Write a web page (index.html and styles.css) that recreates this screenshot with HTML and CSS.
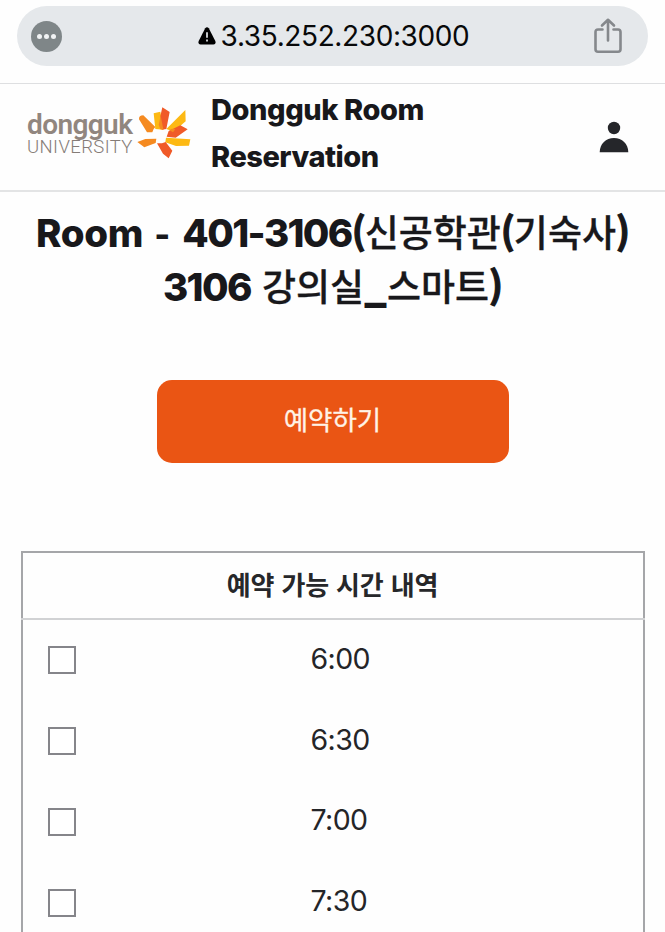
FILE: index.html
```html
<!DOCTYPE html>
<html lang="ko">
<head>
<meta charset="utf-8">
<title>Dongguk Room Reservation</title>
<link rel="stylesheet" href="styles.css">
</head>
<body>
<div class="browser-bar">
  <div class="address">
    <span class="more"><i></i><i></i><i></i></span>
    <div class="url">
      <svg class="warning" width="18" height="18" viewBox="0 0 18 18"><path d="M7.200 1.200Q9-.8 10.800 1.200L17.300 14Q18.300 17.500 15.500 17.500H2.500Q-.3 17.500.7 14Z"/><path class="mark" d="M9 5.200V10.700M9 12.600V14.500"/></svg>
      <span>3.35.252.230:3000</span>
    </div>
    <svg class="share" width="28" height="36" viewBox="0 0 28 36"><path d="M8.500 11.500H4Q1.500 11.500 1.500 14V31.200Q1.500 33.700 4 33.700H24Q26.500 33.700 26.500 31.200V14Q26.500 11.500 24 11.500H19.500M14 22.500V2M8 7.500L14 1.800L20 7.500"/></svg>
  </div>
</div>
<header class="site-header">
  <div class="logo">
    <div class="wordmark"><span class="dongguk">dongguk</span><span class="university">UNIVERSITY</span></div>
    <svg class="flower" width="56" height="54" viewBox="408 79 168 162">
      <path fill="#f58a20" d="M417 119Q416 107 430 107L466 142Q458 149 457 158L441 158ZM412 187L436 178L469 177L467 190L433 203Z"/>
      <path fill="#fdb913" d="M461 101L481 96L491 150L466 148ZM556 91L557 125L519 158Q510 151 499 148ZM498 174L571 179L567 198L528 199L496 188Z"/>
      <path fill="#f05a28" d="M487 83L509 97L499 148L485 150L481 110ZM541 137L563 149L527 174L500 171L506 154ZM471 191L486 191L497 187L517 213L506 236L489 222Z"/>
      <path fill="#f58a20" d="M482 108L490 149L481 149L476 135ZM508 151L519 158L526 149L516 147Z"/>
    </svg>
  </div>
  <div class="site-name">Dongguk Room<br><span class="reservation">Reservation</span></div>
  <svg class="user" width="30" height="32" viewBox="0 0 30 32"><circle cx="15" cy="7" r="6.200"/><path d="M.7 31.200C.7 23 7 17 15 17S29.300 23 29.300 31.200Z"/></svg>
</header>
<main>
  <h1><span class="line"><b class="room">Room</b><b class="dash">-</b><b class="number">401-3106</b><span class="ko"><b>(</b>신공학관<b>(</b>기숙사<b>)</b></span></span><span class="line"><b class="number second">3106</b><span class="ko">강의실<b class="underscore">_</b>스마트<b>)</b></span></span></h1>
  <button class="reserve">예약하기</button>
  <section class="times">
    <h2>예약 가능 시간 내역</h2>
    <label class="slot"><input type="checkbox"><span>6:00</span></label>
    <label class="slot"><input type="checkbox"><span>6:30</span></label>
    <label class="slot"><input type="checkbox"><span>7:00</span></label>
    <label class="slot"><input type="checkbox"><span>7:30</span></label>
  </section>
</main>
</body>
</html>
```
FILE: styles.css
```css
* { box-sizing: border-box; }
html { overflow: hidden; }
body {
  margin: 0;
  height: 932px;
  overflow: hidden;
  display: flex;
  flex-direction: column;
  background: #fefefe;
  color: #18181b;
  font-family: Inter, "Noto Sans CJK KR", sans-serif;
}
.browser-bar {
  flex: none;
  height: 84px;
  padding: 6px 17px 0;
  border-bottom: 1px solid #dedfe1;
}
.address {
  height: 60px;
  border-radius: 30px;
  background: #e5e8eb;
  display: grid;
  grid-template-columns: 60px 1fr 60px;
  align-items: center;
  padding: 0 10px 0 14px;
}
.more {
  width: 31px;
  height: 31px;
  border-radius: 50%;
  background: #7f8688;
  display: flex;
  align-items: center;
  justify-content: center;
  gap: 2px;
}
.more i { width: 5px; height: 5px; border-radius: 50%; background: #f1f3f4; }
.url {
  display: flex;
  align-items: center;
  justify-content: center;
  gap: 5px;
  font-size: 28px;
  line-height: 34px;
  letter-spacing: -.38px;
  color: #08090a;
  white-space: nowrap;
  padding-right: 2px;
}
.warning .mark { fill: none; stroke: #e5e8eb; stroke-width: 1.7; }
.share { justify-self: center; fill: none; stroke: #85888c; stroke-width: 2.6; stroke-linecap: round; stroke-linejoin: round; }
.site-header {
  flex: none;
  height: 108px;
  display: flex;
  align-items: center;
  padding: 0 36px 0 27px;
  border-bottom: 2px solid #e3e4e5;
}
.logo { width: 184px; display: flex; align-items: center; gap: 4px; padding-bottom: 8px; }
.wordmark { width: 105px; padding-top: 4px; display: flex; flex-direction: column; font-family: Roboto, sans-serif; color: #91867f; white-space: nowrap; }
.dongguk { font-size: 28px; line-height: 24px; font-weight: 600; letter-spacing: -.6px; }
.university { font-size: 18.5px; line-height: 21px; font-weight: 300; letter-spacing: .4px; color: #857c77; }
.flower { flex: none; }
.site-name { font-size: 29px; line-height: 47.500px; font-weight: 800; letter-spacing: -.42px; white-space: nowrap; padding-bottom: 8px; }
.reservation { letter-spacing: -.5px; }
.user { margin-left: auto; fill: #25262a; }
main { display: flex; flex-direction: column; align-items: center; padding: 12px 21px 0; }
h1 { margin: 0; font-size: 38.5px; font-weight: 800; }
.line { display: flex; justify-content: center; align-items: baseline; height: 54px; line-height: 54px; white-space: nowrap; }
.line b { font-weight: 800; }
.room { letter-spacing: -.3px; }
.dash { margin: 0 12px 0 11px; font-size: 34px; }
.number { letter-spacing: -1.65px; }
.number.second { margin-right: 11px; letter-spacing: -1.6px; }
.ko { font-family: "Noto Sans CJK KR", sans-serif; font-size: 37px; font-weight: 500; letter-spacing: 0; -webkit-text-stroke: .3px currentColor; }
.line .ko b { font-weight: 700; margin-right: -1px; -webkit-text-stroke: 1.2px currentColor; }
.line .ko .underscore { margin: 0 1px 0 1px; -webkit-text-stroke: 2px currentColor; }
.reserve {
  width: 352px;
  height: 83px;
  margin: 68px 0 88px;
  padding: 0 0 5px;
  border: 0;
  border-radius: 15px;
  background: #ea5514;
  color: #fff3e6;
  font: 400 26.5px/40px "Noto Sans CJK KR", sans-serif;
  -webkit-text-stroke: .3px currentColor;
}
.times { width: 624px; height: 400px; border: 2px solid #a5a6a9; border-bottom: 0; }
h2 {
  margin: 0 -2px;
  height: 67px;
  border-bottom: 2px solid #d1d2d4;
  text-align: center;
  color: #26272a;
  font: 700 26px/61px "Noto Sans CJK KR", sans-serif;
  letter-spacing: -.15px;
}
.slot { height: 80.8px; display: flex; align-items: center; padding-left: 25px; color: #242528; font-size: 28.500px; letter-spacing: -.6px; }
.slot input { appearance: none; width: 28px; height: 28px; margin: 0; border: 2px solid #85858a; background: #fff; }
.slot span { margin-left: 235px; padding-bottom: 4px; }
```
